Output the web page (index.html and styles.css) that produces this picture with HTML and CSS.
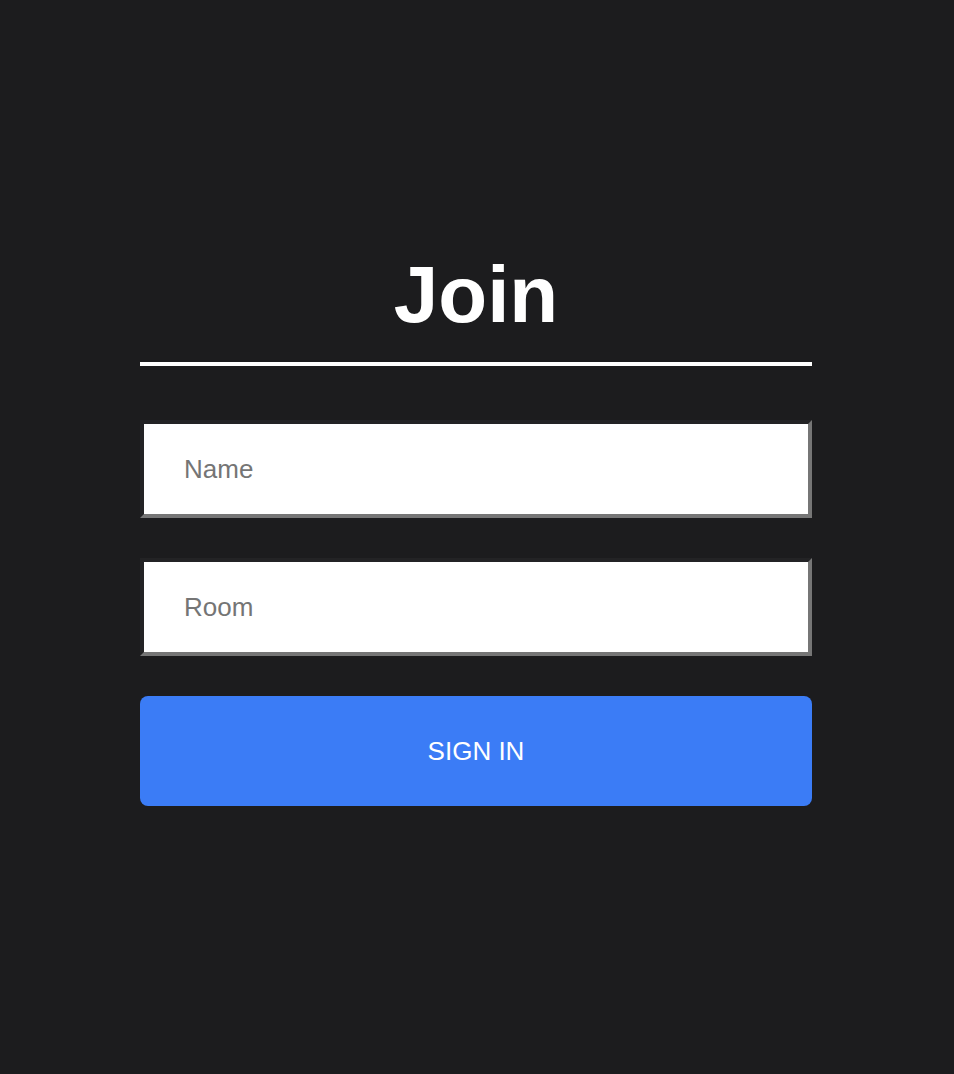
FILE: index.html
```html
<!DOCTYPE html>
<html lang="en">
<head>
    <meta charset="UTF-8">
    <meta name="viewport" content="width=device-width, initial-scale=1.0">
    <title>Join</title>
    <link rel="stylesheet" href="styles.css">
</head>
<body>
    <div class="container">
        <h1 class="title">Join</h1>
        <form class="join-form">
            <input class="field" type="text" placeholder="Name">
            <input class="field" type="text" placeholder="Room">
            <button class="btn" type="submit">Sign In</button>
        </form>
    </div>
</body>
</html>
```

FILE: styles.css
```css
body {
    font-family: "Liberation Sans", Arial, sans-serif;
    margin: 0;
    background: #1c1c1e;
    color: white;
    min-height: 100vh;
}
.container {
    width: 672px;
    margin: 0 auto;
    padding-top: 249px;
    transform: translateX(-1px);
}
.title {
    margin: 0;
    padding-bottom: 21px;
    border-bottom: 4px solid white;
    font-size: 80px;
    font-weight: 700;
    text-align: center;
}
.join-form {
    display: flex;
    flex-direction: column;
    gap: 40px;
    margin-top: 54px;
}
.field {
    box-sizing: border-box;
    height: 98px;
    padding: 0 40px;
    border-style: solid;
    border-width: 4px;
    border-color: #232325 #767676 #767676 #232325;
    background: white;
    font-family: inherit;
    font-size: 26px;
    color: #333;
    outline: none;
}
.field::placeholder {
    color: #757575;
}
.btn {
    height: 110px;
    border: none;
    border-radius: 8px;
    background: #3b7cf6;
    color: white;
    font-family: inherit;
    font-size: 26px;
    text-transform: uppercase;
    cursor: pointer;
}
```
